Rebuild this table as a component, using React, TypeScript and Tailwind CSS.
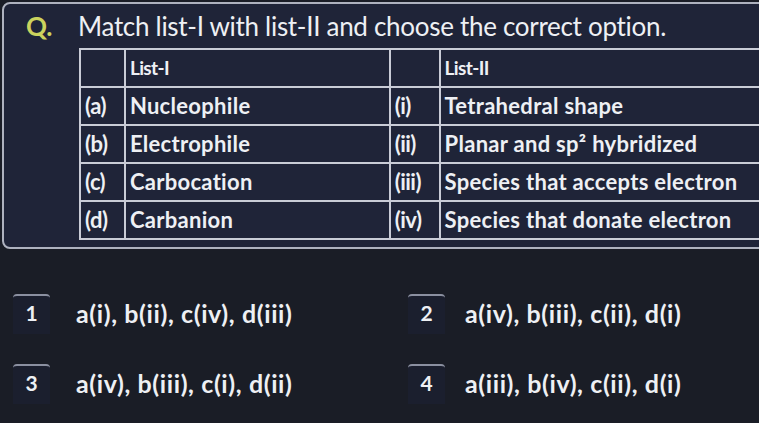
import React from 'react';

const rows = [
  { l: '(a)', a: 'Nucleophile', r: '(i)', b: 'Tetrahedral shape' },
  { l: '(b)', a: 'Electrophile', r: '(ii)', b: 'Planar and sp² hybridized' },
  { l: '(c)', a: 'Carbocation', r: '(iii)', b: 'Species that accepts electron' },
  { l: '(d)', a: 'Carbanion', r: '(iv)', b: 'Species that donate electron' },
];

const options = [
  ['1', 'a(i), b(ii), c(iv), d(iii)'],
  ['2', 'a(iv), b(iii), c(ii), d(i)'],
  ['3', 'a(iv), b(iii), c(i), d(ii)'],
  ['4', 'a(iii), b(iv), c(ii), d(i)'],
];

const cell = 'border-2 border-[#c9ccd6] px-[4px] h-[38px] py-0 align-middle whitespace-nowrap';

export default function App() {
  return (
    <div className="w-[759px] h-[423px] overflow-hidden bg-[#1a1d26] text-[#eef0f4] font-['Lato',sans-serif] pt-[2px] pl-[2px]">
      <div className="w-[800px] h-[247px] rounded-[8px] border-2 border-[#aeb2bf] bg-[#1f2438] pl-[22px] pt-[6px]">
        <div className="flex items-baseline text-[26px] leading-[32px] tracking-[-0.3px]">
          <span className="w-[52px] text-[#cbd35e] font-bold">Q.</span>
          <span>Match list-I with list-II and choose the correct option.</span>
        </div>
        <table className="mt-[6px] ml-[53px] border-collapse text-[22px] font-bold tracking-[0.3px] leading-[24px]">
          <thead>
            <tr>
              <th className={`${cell} w-[45px]`}></th>
              <th className={`${cell} w-[266px] text-left text-[19px] tracking-[-0.6px]`}>List-I</th>
              <th className={`${cell} w-[50px]`}></th>
              <th className={`${cell} w-[360px] text-left text-[19px] tracking-[-0.6px]`}>List-II</th>
            </tr>
          </thead>
          <tbody>
            {rows.map((r) => (
              <tr key={r.l}>
                <td className={`${cell} tracking-[-0.5px]`}>{r.l}</td>
                <td className={cell}>{r.a}</td>
                <td className={`${cell} tracking-[-0.5px]`}>{r.r}</td>
                <td className={cell}>{r.b}</td>
              </tr>
            ))}
          </tbody>
        </table>
      </div>
      <div className="grid grid-cols-2 gap-y-[30px] pl-[11px] pt-[45px] text-[25px] font-bold">
        {options.map(([n, t]) => (
          <div key={n} className={`flex items-center ${n === '2' || n === '4' ? 'pl-[22px] gap-[20px]' : 'gap-[26px]'}`}>
            <div className="w-[37px] h-[40px] rounded-t-[4px] border-t-2 border-[#8b90a0] bg-[#1b1f2e] flex items-end justify-center pb-[6px] text-[21px] font-bold">
              {n}
            </div>
            <span className="tracking-[0.6px]">{t}</span>
          </div>
        ))}
      </div>
    </div>
  );
}
